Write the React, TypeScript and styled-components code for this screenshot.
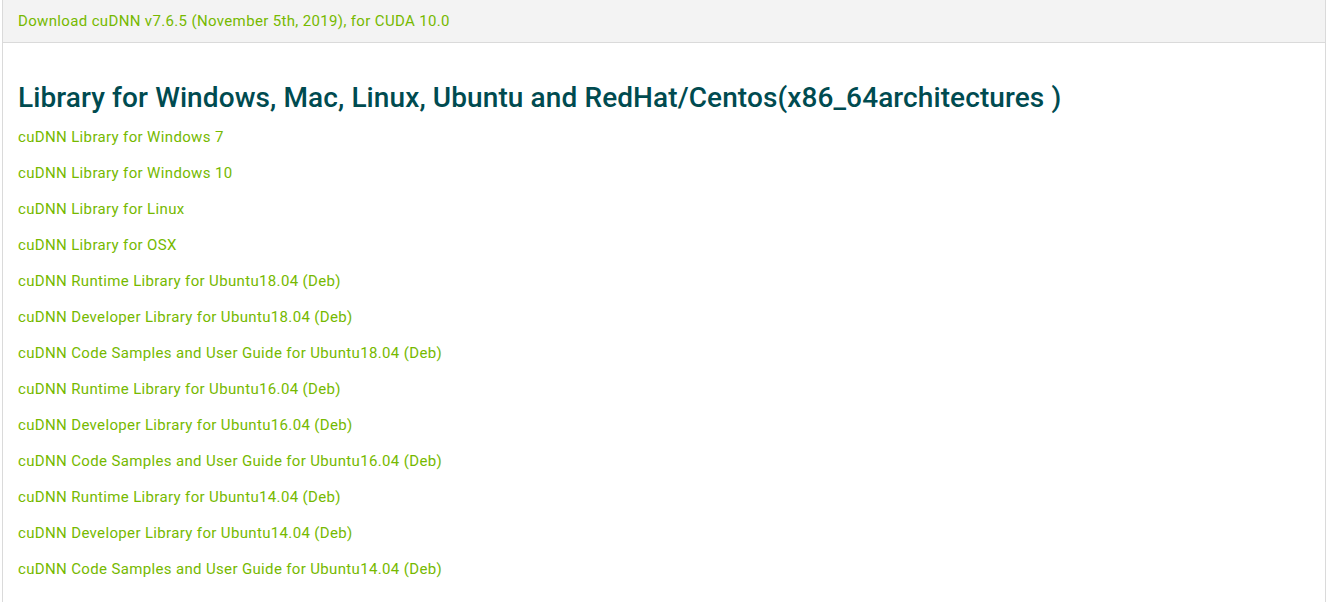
import React from "react";
import styled, { createGlobalStyle } from "styled-components";

const Global = createGlobalStyle`
  html, body { margin: 0; padding: 0; background: #fff; }
  body { font-family: Roboto, "Liberation Sans", sans-serif; }
`;

const Wrapper = styled.div`
  padding: 0 2px 0 2px;
`;

const Panel = styled.section`
  border: 1px solid #dadada;
  border-top: none;
  border-bottom: none;
  min-height: 602px;
  box-sizing: border-box;
`;

const Header = styled.div`
  background: #f3f3f3;
  border-bottom: 1px solid #dadada;
  height: 43px;
  box-sizing: border-box;
  padding: 0 15px;
  display: flex;
  align-items: center;
`;

const Link = styled.a`
  color: #76b900;
  font-size: 15px;
  letter-spacing: 0.35px;
  text-decoration: none;
  line-height: 20px;
`;

const Body = styled.div`
  padding: 38px 15px 0 15px;
`;

const Heading = styled.h2`
  margin: 0 0 4px 0;
  font-size: 28px;
  font-weight: 500;
  color: #004b50;
  line-height: 34px;
  letter-spacing: 0.1px;
`;

const List = styled.ul`
  list-style: none;
  margin: 0;
  padding: 0;
  display: flex;
  flex-direction: column;
`;

const Item = styled.li`
  height: 36px;
  display: flex;
  align-items: center;
`;

const links = [
  "cuDNN Library for Windows 7",
  "cuDNN Library for Windows 10",
  "cuDNN Library for Linux",
  "cuDNN Library for OSX",
  "cuDNN Runtime Library for Ubuntu18.04 (Deb)",
  "cuDNN Developer Library for Ubuntu18.04 (Deb)",
  "cuDNN Code Samples and User Guide for Ubuntu18.04 (Deb)",
  "cuDNN Runtime Library for Ubuntu16.04 (Deb)",
  "cuDNN Developer Library for Ubuntu16.04 (Deb)",
  "cuDNN Code Samples and User Guide for Ubuntu16.04 (Deb)",
  "cuDNN Runtime Library for Ubuntu14.04 (Deb)",
  "cuDNN Developer Library for Ubuntu14.04 (Deb)",
  "cuDNN Code Samples and User Guide for Ubuntu14.04 (Deb)",
];

export default function App() {
  return (
    <>
      <Global />
      <Wrapper>
        <Panel>
          <Header>
            <Link href="#">Download cuDNN v7.6.5 (November 5th, 2019), for CUDA 10.0</Link>
          </Header>
          <Body>
            <Heading>Library for Windows, Mac, Linux, Ubuntu and RedHat/Centos(x86_64architectures )</Heading>
            <List>
              {links.map((l) => (
                <Item key={l}>
                  <Link href="#">{l}</Link>
                </Item>
              ))}
            </List>
          </Body>
        </Panel>
      </Wrapper>
    </>
  );
}
